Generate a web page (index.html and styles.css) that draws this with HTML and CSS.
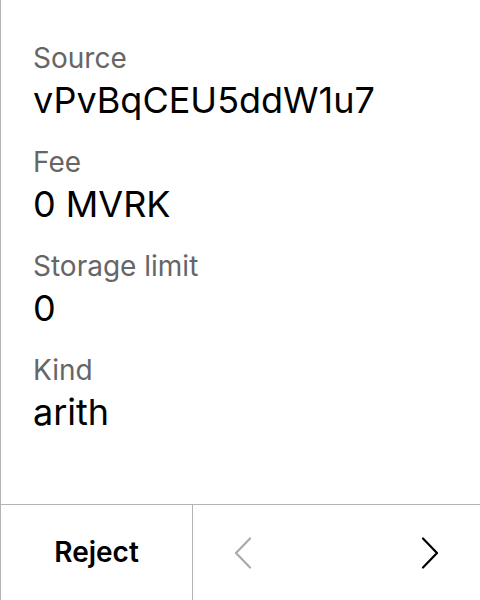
FILE: index.html
```html
<!DOCTYPE html>
<html>
<head>
<meta charset="utf-8">
<link rel="stylesheet" href="styles.css">
</head>
<body>
<div class="screen">
  <main class="details">
    <div class="field">
      <div class="label">Source</div>
      <div class="value">vPvBqCEU5ddW1u7</div>
    </div>
    <div class="field">
      <div class="label">Fee</div>
      <div class="value">0 MVRK</div>
    </div>
    <div class="field">
      <div class="label">Storage limit</div>
      <div class="value">0</div>
    </div>
    <div class="field">
      <div class="label">Kind</div>
      <div class="value">arith</div>
    </div>
  </main>
  <footer class="actions">
    <button class="reject">Reject</button>
    <div class="nav">
      <button class="nav-btn disabled" aria-label="Previous">
        <svg width="18" height="32" viewBox="0 0 18 32"><path d="M16 1.5 L2 16 L16 30.5" fill="none" stroke="currentColor" stroke-width="2.2" stroke-linecap="round" stroke-linejoin="round"/></svg>
      </button>
      <button class="nav-btn" aria-label="Next">
        <svg width="18" height="32" viewBox="0 0 18 32"><path d="M2 1.5 L16 16 L2 30.5" fill="none" stroke="currentColor" stroke-width="2.2" stroke-linecap="round" stroke-linejoin="round"/></svg>
      </button>
    </div>
  </footer>
</div>
</body>
</html>
```

FILE: styles.css
```css
html, body {
  margin: 0;
  padding: 0;
  background: #ffffff;
}
body {
  font-family: "Inter", "Noto Sans", sans-serif;
  color: #000;
}
.screen {
  width: 480px;
  height: 600px;
  box-sizing: border-box;
  border-left: 1px solid #b3b3b3;
  display: flex;
  flex-direction: column;
}
.details {
  flex: 1;
  padding: 41px 32px 0 32px;
  display: flex;
  flex-direction: column;
  gap: 23px;
}
.field {
  display: flex;
  flex-direction: column;
  gap: 3px;
}
.label {
  font-size: 28px;
  line-height: 34px;
  color: #666666;
}
.value {
  font-size: 36px;
  line-height: 44px;
  color: #000;
}
.actions {
  height: 96px;
  box-sizing: border-box;
  border-top: 1px solid #b3b3b3;
  display: flex;
}
.reject {
  width: 192px;
  border: none;
  border-right: 1px solid #b3b3b3;
  background: #fff;
  font-family: inherit;
  font-size: 28px;
  font-weight: 600;
  color: #000;
  padding: 0 0 2px 0;
}
.nav {
  flex: 1;
  display: flex;
  justify-content: space-between;
}
.nav-btn {
  width: 100px;
  border: none;
  background: #fff;
  padding: 0;
  color: #000;
  display: flex;
  align-items: center;
  justify-content: center;
}
.nav-btn.disabled {
  color: #aaaaaa;
}
```
